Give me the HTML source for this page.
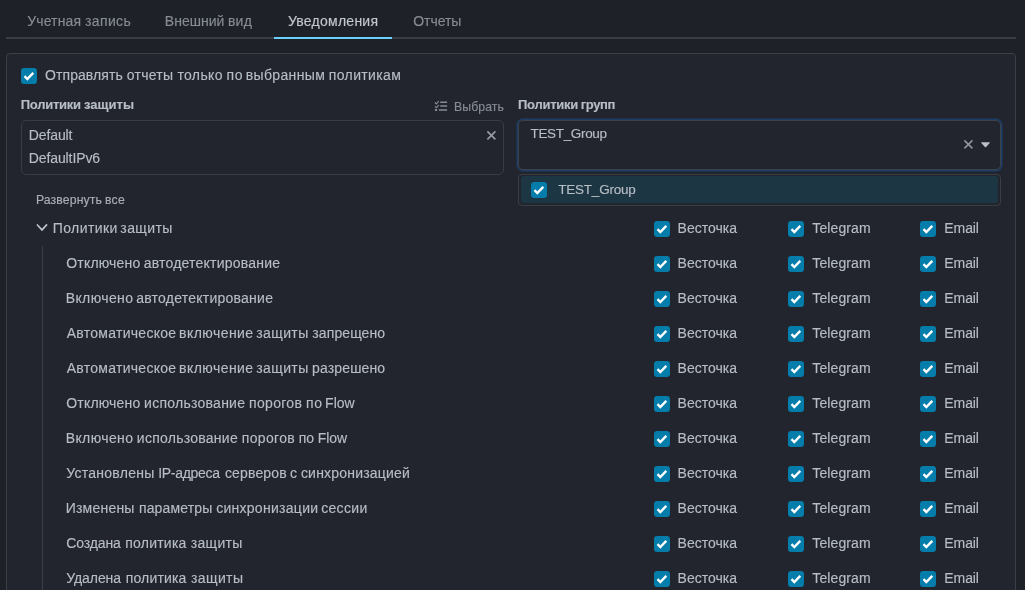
<!DOCTYPE html>
<html lang="ru"><head><meta charset="utf-8"><title>Уведомления</title>
<style>
html,body{margin:0;padding:0;}
body{width:1025px;height:590px;overflow:hidden;background:#1e2128;position:relative;font-family:"Liberation Sans",sans-serif;}
.t{-webkit-text-stroke:0.15px currentColor;position:absolute;white-space:nowrap;line-height:20px;font-family:"Liberation Sans",sans-serif;}
.abs{position:absolute;}
.tabline{left:6px;top:37px;width:1010px;height:2px;background:#3a3d41;}
.tabactive{left:274px;top:37px;width:118px;height:2px;background:#6ccfff;}
.panel{left:6px;top:53px;width:1008px;height:560px;border:1px solid #3c3f44;border-radius:4px;background:#22252e;}
.box1{left:21px;top:120px;width:481px;height:53px;border:1px solid #393c42;border-radius:5px;}
.box2{left:518px;top:120px;width:481px;height:48px;border:1px solid #3d4148;border-radius:5px;box-shadow:0 0 0 1.5px #1c3d66;}
.dd{left:518px;top:174px;width:481px;height:30px;border:1px solid #3a3d42;border-radius:4px;background:#22252e;}
.dditem{left:521px;top:176px;width:477px;height:27px;border-radius:3px;background:#1c3643;}
.vline{left:42px;top:246px;width:1px;height:350px;background:#3b3e44;}
.cb{position:absolute;width:16px;height:16px;}
</style></head><body>
<svg width="0" height="0" style="position:absolute"><defs>
<g id="cb"><rect x="0" y="0" width="16" height="16" rx="3.2" fill="#047dab"/><path d="M3.5 8.2 L6.3 11 L12.3 4.9" fill="none" stroke="#fff" stroke-width="2.4"/></g>
</defs></svg>
<div class="abs tabline"></div><div class="abs tabactive"></div>
<div class="abs panel"></div>
<div class="abs box1"></div>
<div class="abs box2"></div>
<div class="abs dd"></div><div class="abs dditem"></div>
<div class="abs vline"></div>

<svg class="abs" style="left:486px;top:130px" width="11" height="11" viewBox="0 0 11 11"><path d="M1.4 1.4 L9.4 9.4 M9.4 1.4 L1.4 9.4" stroke="#9a9fa6" stroke-width="1.5" fill="none"/></svg>
<svg class="abs" style="left:963px;top:138.6px" width="11" height="11" viewBox="0 0 11 11"><path d="M1.4 1.4 L9.4 9.4 M9.4 1.4 L1.4 9.4" stroke="#92979e" stroke-width="1.5" fill="none"/></svg>
<svg class="abs" style="left:980px;top:141px" width="11" height="8" viewBox="0 0 11 8"><path d="M1.6 1.2 H9.4 Q10.4 1.2 9.7 2 L6.1 6 Q5.5 6.6 4.9 6 L1.3 2 Q0.6 1.2 1.6 1.2 Z" fill="#b9c0c8"/></svg>
<svg class="abs" style="left:36px;top:223px" width="12" height="10" viewBox="0 0 12 10"><path d="M1.4 2 L6 6.9 L10.6 1.9" stroke="#bcc2c9" stroke-width="1.7" fill="none" stroke-linecap="round"/></svg>
<svg class="abs" style="left:434px;top:100px" width="14" height="12" viewBox="0 0 14 12"><g stroke="#868b93" fill="none"><path d="M6.2 2.2 H13.1 M6.2 6.05 H13.1 M4.9 10.05 H13.1" stroke-width="1.6"/><path d="M0.9 2.5 L2.3 3.8 L4.8 1.2 M0.9 6.4 L2.3 7.7 L4.8 5.1" stroke-width="1.2"/></g><rect x="0.9" y="9" width="2.2" height="2" fill="#868b93"/></svg>

<svg class="cb" style="left:21px;top:68px" viewBox="0 0 16 16"><use href="#cb"/></svg>
<svg class="cb" style="left:531px;top:182px" viewBox="0 0 16 16"><use href="#cb"/></svg>
<svg class="cb" style="left:654px;top:221px" viewBox="0 0 16 16"><use href="#cb"/></svg>
<svg class="cb" style="left:788px;top:221px" viewBox="0 0 16 16"><use href="#cb"/></svg>
<svg class="cb" style="left:920px;top:221px" viewBox="0 0 16 16"><use href="#cb"/></svg>
<svg class="cb" style="left:654px;top:256px" viewBox="0 0 16 16"><use href="#cb"/></svg>
<svg class="cb" style="left:788px;top:256px" viewBox="0 0 16 16"><use href="#cb"/></svg>
<svg class="cb" style="left:920px;top:256px" viewBox="0 0 16 16"><use href="#cb"/></svg>
<svg class="cb" style="left:654px;top:291px" viewBox="0 0 16 16"><use href="#cb"/></svg>
<svg class="cb" style="left:788px;top:291px" viewBox="0 0 16 16"><use href="#cb"/></svg>
<svg class="cb" style="left:920px;top:291px" viewBox="0 0 16 16"><use href="#cb"/></svg>
<svg class="cb" style="left:654px;top:326px" viewBox="0 0 16 16"><use href="#cb"/></svg>
<svg class="cb" style="left:788px;top:326px" viewBox="0 0 16 16"><use href="#cb"/></svg>
<svg class="cb" style="left:920px;top:326px" viewBox="0 0 16 16"><use href="#cb"/></svg>
<svg class="cb" style="left:654px;top:361px" viewBox="0 0 16 16"><use href="#cb"/></svg>
<svg class="cb" style="left:788px;top:361px" viewBox="0 0 16 16"><use href="#cb"/></svg>
<svg class="cb" style="left:920px;top:361px" viewBox="0 0 16 16"><use href="#cb"/></svg>
<svg class="cb" style="left:654px;top:396px" viewBox="0 0 16 16"><use href="#cb"/></svg>
<svg class="cb" style="left:788px;top:396px" viewBox="0 0 16 16"><use href="#cb"/></svg>
<svg class="cb" style="left:920px;top:396px" viewBox="0 0 16 16"><use href="#cb"/></svg>
<svg class="cb" style="left:654px;top:431px" viewBox="0 0 16 16"><use href="#cb"/></svg>
<svg class="cb" style="left:788px;top:431px" viewBox="0 0 16 16"><use href="#cb"/></svg>
<svg class="cb" style="left:920px;top:431px" viewBox="0 0 16 16"><use href="#cb"/></svg>
<svg class="cb" style="left:654px;top:466px" viewBox="0 0 16 16"><use href="#cb"/></svg>
<svg class="cb" style="left:788px;top:466px" viewBox="0 0 16 16"><use href="#cb"/></svg>
<svg class="cb" style="left:920px;top:466px" viewBox="0 0 16 16"><use href="#cb"/></svg>
<svg class="cb" style="left:654px;top:501px" viewBox="0 0 16 16"><use href="#cb"/></svg>
<svg class="cb" style="left:788px;top:501px" viewBox="0 0 16 16"><use href="#cb"/></svg>
<svg class="cb" style="left:920px;top:501px" viewBox="0 0 16 16"><use href="#cb"/></svg>
<svg class="cb" style="left:654px;top:536px" viewBox="0 0 16 16"><use href="#cb"/></svg>
<svg class="cb" style="left:788px;top:536px" viewBox="0 0 16 16"><use href="#cb"/></svg>
<svg class="cb" style="left:920px;top:536px" viewBox="0 0 16 16"><use href="#cb"/></svg>
<svg class="cb" style="left:654px;top:571px" viewBox="0 0 16 16"><use href="#cb"/></svg>
<svg class="cb" style="left:788px;top:571px" viewBox="0 0 16 16"><use href="#cb"/></svg>
<svg class="cb" style="left:920px;top:571px" viewBox="0 0 16 16"><use href="#cb"/></svg>
<div class="abs" style="left:0;top:0;width:1025px;height:590px;will-change:transform"><span class="t" style="left:27.18px;top:11.15px;font-size:14px;letter-spacing:0.134px;color:#878c94;">Учетная</span>
<span class="t" style="left:85.00px;top:11.15px;font-size:14px;letter-spacing:0.371px;color:#878c94;">запись</span>
<span class="t" style="left:164.85px;top:11.15px;font-size:14px;letter-spacing:0.018px;color:#878c94;">Внешний</span>
<span class="t" style="left:227.94px;top:11.15px;font-size:14px;letter-spacing:0.242px;color:#878c94;">вид</span>
<span class="t" style="left:287.96px;top:11.15px;font-size:14px;letter-spacing:0.253px;color:#c3c8ce;">Уведомления</span>
<span class="t" style="left:413.24px;top:11.15px;font-size:14px;letter-spacing:-0.043px;color:#878c94;">Отчеты</span>
<span class="t" style="left:45.09px;top:65.15px;font-size:14px;letter-spacing:0.063px;color:#b7bdc5;">Отправлять</span>
<span class="t" style="left:126.75px;top:65.15px;font-size:14px;letter-spacing:0.266px;color:#b7bdc5;">отчеты</span>
<span class="t" style="left:177.41px;top:65.15px;font-size:14px;letter-spacing:0.361px;color:#b7bdc5;">только</span>
<span class="t" style="left:226.56px;top:65.15px;font-size:14px;letter-spacing:0.521px;color:#b7bdc5;">по</span>
<span class="t" style="left:245.81px;top:65.15px;font-size:14px;letter-spacing:0.342px;color:#b7bdc5;">выбранным</span>
<span class="t" style="left:328.84px;top:65.15px;font-size:14px;letter-spacing:0.360px;color:#b7bdc5;">политикам</span>
<span class="t" style="left:20.78px;top:95.49px;font-size:13px;font-weight:700;letter-spacing:-0.270px;color:#b7bdc5;">Политики</span>
<span class="t" style="left:83.93px;top:95.49px;font-size:13px;font-weight:700;letter-spacing:0.029px;color:#b7bdc5;">защиты</span>
<span class="t" style="left:518.02px;top:95.49px;font-size:13px;font-weight:700;letter-spacing:-0.274px;color:#b7bdc5;">Политики</span>
<span class="t" style="left:580.82px;top:95.49px;font-size:13px;font-weight:700;letter-spacing:-0.378px;color:#b7bdc5;">групп</span>
<span class="t" style="left:454.09px;top:96.75px;font-size:12.25px;letter-spacing:0.076px;color:#878c94;">Выбрать</span>
<span class="t" style="left:28.67px;top:125.15px;font-size:14px;letter-spacing:-0.086px;color:#b7bdc5;">Default</span>
<span class="t" style="left:28.67px;top:148.15px;font-size:14px;letter-spacing:-0.088px;color:#b7bdc5;">DefaultIPv6</span>
<span class="t" style="left:530.57px;top:124.32px;font-size:13.5px;letter-spacing:-0.347px;color:#b7bdc5;">TEST_Group</span>
<span class="t" style="left:558.31px;top:180.32px;font-size:13.5px;letter-spacing:-0.233px;color:#b7bdc5;">TEST_Group</span>
<span class="t" style="left:35.93px;top:189.75px;font-size:12.25px;letter-spacing:0.122px;color:#a9aeb5;">Развернуть</span>
<span class="t" style="left:105.01px;top:189.75px;font-size:12.25px;letter-spacing:0.237px;color:#a9aeb5;">все</span>
<span class="t" style="left:52.73px;top:218.15px;font-size:14px;letter-spacing:0.422px;color:#b7bdc5;">Политики</span>
<span class="t" style="left:120.33px;top:218.15px;font-size:14px;letter-spacing:0.382px;color:#b7bdc5;">защиты</span>
<span class="t" style="left:66.28px;top:253.15px;font-size:14px;letter-spacing:0.180px;color:#b7bdc5;">Отключено</span>
<span class="t" style="left:143.64px;top:253.15px;font-size:14px;letter-spacing:0.216px;color:#b7bdc5;">автодетектирование</span>
<span class="t" style="left:65.72px;top:288.15px;font-size:14px;letter-spacing:0.388px;color:#b7bdc5;">Включено</span>
<span class="t" style="left:136.22px;top:288.15px;font-size:14px;letter-spacing:0.237px;color:#b7bdc5;">автодетектирование</span>
<span class="t" style="left:66.67px;top:323.15px;font-size:14px;letter-spacing:0.280px;color:#b7bdc5;">Автоматическое</span>
<span class="t" style="left:179.10px;top:323.15px;font-size:14px;letter-spacing:0.440px;color:#b7bdc5;">включение</span>
<span class="t" style="left:256.18px;top:323.15px;font-size:14px;letter-spacing:0.410px;color:#b7bdc5;">защиты</span>
<span class="t" style="left:312.32px;top:323.15px;font-size:14px;letter-spacing:0.094px;color:#b7bdc5;">запрещено</span>
<span class="t" style="left:66.67px;top:358.15px;font-size:14px;letter-spacing:0.280px;color:#b7bdc5;">Автоматическое</span>
<span class="t" style="left:179.10px;top:358.15px;font-size:14px;letter-spacing:0.440px;color:#b7bdc5;">включение</span>
<span class="t" style="left:256.18px;top:358.15px;font-size:14px;letter-spacing:0.410px;color:#b7bdc5;">защиты</span>
<span class="t" style="left:312.07px;top:358.15px;font-size:14px;letter-spacing:0.136px;color:#b7bdc5;">разрешено</span>
<span class="t" style="left:66.28px;top:393.15px;font-size:14px;letter-spacing:0.180px;color:#b7bdc5;">Отключено</span>
<span class="t" style="left:144.11px;top:393.15px;font-size:14px;letter-spacing:0.256px;color:#b7bdc5;">использование</span>
<span class="t" style="left:249.11px;top:393.15px;font-size:14px;letter-spacing:0.304px;color:#b7bdc5;">порогов</span>
<span class="t" style="left:306.11px;top:393.15px;font-size:14px;letter-spacing:0.545px;color:#b7bdc5;">по</span>
<span class="t" style="left:325.11px;top:393.15px;font-size:14px;letter-spacing:-0.028px;color:#b7bdc5;">Flow</span>
<span class="t" style="left:65.72px;top:428.15px;font-size:14px;letter-spacing:0.388px;color:#b7bdc5;">Включено</span>
<span class="t" style="left:136.80px;top:428.15px;font-size:14px;letter-spacing:0.261px;color:#b7bdc5;">использование</span>
<span class="t" style="left:241.71px;top:428.15px;font-size:14px;letter-spacing:0.349px;color:#b7bdc5;">порогов</span>
<span class="t" style="left:298.70px;top:428.15px;font-size:14px;color:#b7bdc5;">по</span>
<span class="t" style="left:317.75px;top:428.15px;font-size:14px;letter-spacing:-0.027px;color:#b7bdc5;">Flow</span>
<span class="t" style="left:66.18px;top:463.15px;font-size:14px;letter-spacing:0.277px;color:#b7bdc5;">Установлены</span>
<span class="t" style="left:158.23px;top:463.15px;font-size:14px;letter-spacing:-0.304px;color:#b7bdc5;">IP-адреса</span>
<span class="t" style="left:224.92px;top:463.15px;font-size:14px;letter-spacing:0.156px;color:#b7bdc5;">серверов</span>
<span class="t" style="left:289.91px;top:463.15px;font-size:14px;color:#b7bdc5;">с</span>
<span class="t" style="left:300.92px;top:463.15px;font-size:14px;letter-spacing:0.202px;color:#b7bdc5;">синхронизацией</span>
<span class="t" style="left:65.67px;top:498.15px;font-size:14px;letter-spacing:0.225px;color:#b7bdc5;">Изменены</span>
<span class="t" style="left:138.96px;top:498.15px;font-size:14px;letter-spacing:0.143px;color:#b7bdc5;">параметры</span>
<span class="t" style="left:216.14px;top:498.15px;font-size:14px;letter-spacing:0.282px;color:#b7bdc5;">синхронизации</span>
<span class="t" style="left:321.14px;top:498.15px;font-size:14px;letter-spacing:0.347px;color:#b7bdc5;">сессии</span>
<span class="t" style="left:66.22px;top:533.15px;font-size:14px;letter-spacing:-0.108px;color:#b7bdc5;">Создана</span>
<span class="t" style="left:125.21px;top:533.15px;font-size:14px;letter-spacing:0.240px;color:#b7bdc5;">политика</span>
<span class="t" style="left:190.67px;top:533.15px;font-size:14px;letter-spacing:0.341px;color:#b7bdc5;">защиты</span>
<span class="t" style="left:66.25px;top:568.15px;font-size:14px;letter-spacing:-0.071px;color:#b7bdc5;">Удалена</span>
<span class="t" style="left:125.76px;top:568.15px;font-size:14px;letter-spacing:0.153px;color:#b7bdc5;">политика</span>
<span class="t" style="left:191.01px;top:568.15px;font-size:14px;letter-spacing:0.388px;color:#b7bdc5;">защиты</span>
<span class="t" style="left:677.55px;top:218.15px;font-size:14px;color:#b7bdc5;">Весточка</span>
<span class="t" style="left:812.33px;top:218.15px;font-size:14px;letter-spacing:0.095px;color:#b7bdc5;">Telegram</span>
<span class="t" style="left:944.33px;top:218.15px;font-size:14px;letter-spacing:-0.091px;color:#b7bdc5;">Email</span>
<span class="t" style="left:677.55px;top:253.15px;font-size:14px;color:#b7bdc5;">Весточка</span>
<span class="t" style="left:812.33px;top:253.15px;font-size:14px;letter-spacing:0.095px;color:#b7bdc5;">Telegram</span>
<span class="t" style="left:944.33px;top:253.15px;font-size:14px;letter-spacing:-0.091px;color:#b7bdc5;">Email</span>
<span class="t" style="left:677.55px;top:288.15px;font-size:14px;color:#b7bdc5;">Весточка</span>
<span class="t" style="left:812.33px;top:288.15px;font-size:14px;letter-spacing:0.095px;color:#b7bdc5;">Telegram</span>
<span class="t" style="left:944.33px;top:288.15px;font-size:14px;letter-spacing:-0.091px;color:#b7bdc5;">Email</span>
<span class="t" style="left:677.55px;top:323.15px;font-size:14px;color:#b7bdc5;">Весточка</span>
<span class="t" style="left:812.33px;top:323.15px;font-size:14px;letter-spacing:0.095px;color:#b7bdc5;">Telegram</span>
<span class="t" style="left:944.33px;top:323.15px;font-size:14px;letter-spacing:-0.091px;color:#b7bdc5;">Email</span>
<span class="t" style="left:677.55px;top:358.15px;font-size:14px;color:#b7bdc5;">Весточка</span>
<span class="t" style="left:812.33px;top:358.15px;font-size:14px;letter-spacing:0.095px;color:#b7bdc5;">Telegram</span>
<span class="t" style="left:944.33px;top:358.15px;font-size:14px;letter-spacing:-0.091px;color:#b7bdc5;">Email</span>
<span class="t" style="left:677.55px;top:393.15px;font-size:14px;color:#b7bdc5;">Весточка</span>
<span class="t" style="left:812.33px;top:393.15px;font-size:14px;letter-spacing:0.095px;color:#b7bdc5;">Telegram</span>
<span class="t" style="left:944.33px;top:393.15px;font-size:14px;letter-spacing:-0.091px;color:#b7bdc5;">Email</span>
<span class="t" style="left:677.55px;top:428.15px;font-size:14px;color:#b7bdc5;">Весточка</span>
<span class="t" style="left:812.33px;top:428.15px;font-size:14px;letter-spacing:0.095px;color:#b7bdc5;">Telegram</span>
<span class="t" style="left:944.33px;top:428.15px;font-size:14px;letter-spacing:-0.091px;color:#b7bdc5;">Email</span>
<span class="t" style="left:677.55px;top:463.15px;font-size:14px;color:#b7bdc5;">Весточка</span>
<span class="t" style="left:812.33px;top:463.15px;font-size:14px;letter-spacing:0.095px;color:#b7bdc5;">Telegram</span>
<span class="t" style="left:944.33px;top:463.15px;font-size:14px;letter-spacing:-0.091px;color:#b7bdc5;">Email</span>
<span class="t" style="left:677.55px;top:498.15px;font-size:14px;color:#b7bdc5;">Весточка</span>
<span class="t" style="left:812.33px;top:498.15px;font-size:14px;letter-spacing:0.095px;color:#b7bdc5;">Telegram</span>
<span class="t" style="left:944.33px;top:498.15px;font-size:14px;letter-spacing:-0.091px;color:#b7bdc5;">Email</span>
<span class="t" style="left:677.55px;top:533.15px;font-size:14px;color:#b7bdc5;">Весточка</span>
<span class="t" style="left:812.33px;top:533.15px;font-size:14px;letter-spacing:0.095px;color:#b7bdc5;">Telegram</span>
<span class="t" style="left:944.33px;top:533.15px;font-size:14px;letter-spacing:-0.091px;color:#b7bdc5;">Email</span>
<span class="t" style="left:677.55px;top:568.15px;font-size:14px;color:#b7bdc5;">Весточка</span>
<span class="t" style="left:812.33px;top:568.15px;font-size:14px;letter-spacing:0.095px;color:#b7bdc5;">Telegram</span>
<span class="t" style="left:944.33px;top:568.15px;font-size:14px;letter-spacing:-0.091px;color:#b7bdc5;">Email</span></div>
</body></html>
